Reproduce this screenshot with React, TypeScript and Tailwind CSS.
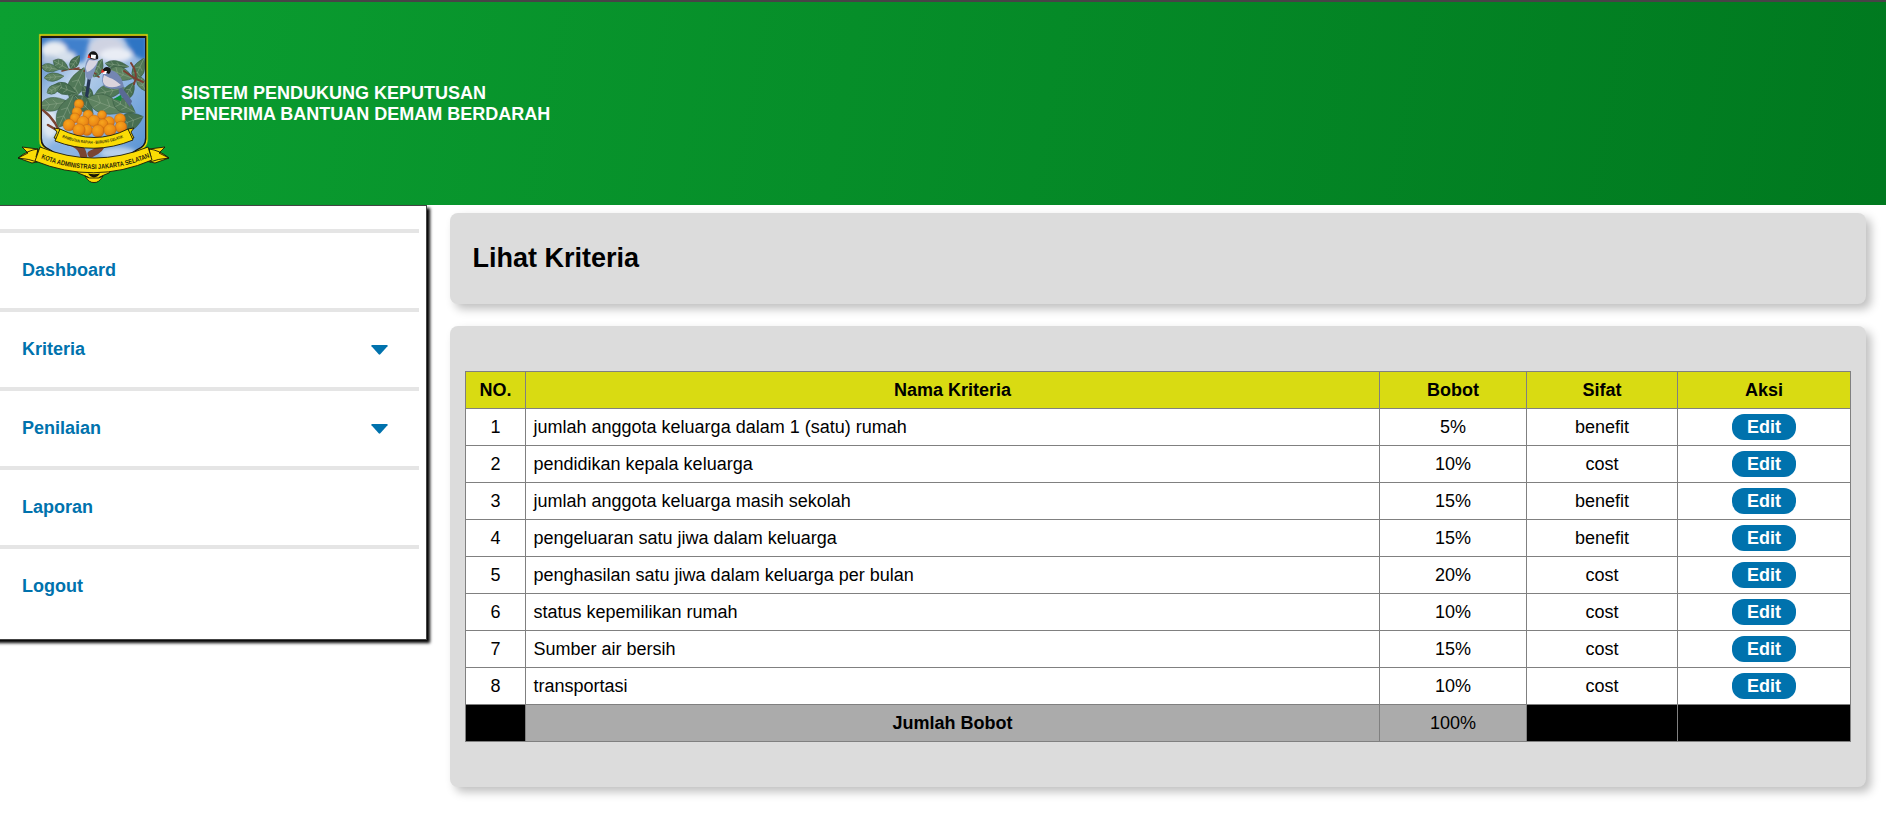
const menu = [
  { label: "Dashboard", open: false },
  { label: "Kriteria", open: true },
  { label: "Penilaian", open: true },
  { label: "Laporan", open: false },
  { label: "Logout", open: false },
];

const rows = [
  ["jumlah anggota keluarga dalam 1 (satu) rumah", "5%", "benefit"],
  ["pendidikan kepala keluarga", "10%", "cost"],
  ["jumlah anggota keluarga masih sekolah", "15%", "benefit"],
  ["pengeluaran satu jiwa dalam keluarga", "15%", "benefit"],
  ["penghasilan satu jiwa dalam keluarga per bulan", "20%", "cost"],
  ["status kepemilikan rumah", "10%", "cost"],
  ["Sumber air bersih", "15%", "cost"],
  ["transportasi", "10%", "cost"],
];

const leaves: [number, number, number, number, number][] = [
  // cx, cy, rx, ry, rotation
  [50, 68, 9, 5, 10],
  [61, 65, 9, 6, 30],
  [75, 62, 8, 5, -55],
  [54, 77, 10, 5, -5],
  [77, 83, 17, 9, -65],
  [65, 89, 12, 7, 20],
  [54, 89, 8, 5, -30],
  [98, 68, 10, 6, -65],
  [117, 65, 12, 5, 8],
  [121, 74, 13, 8, 20],
  [139, 69, 12, 7, -65],
  [129, 91, 10, 6, -60],
  [142, 84, 9, 5, 60],
  [110, 91, 15, 8, -12],
  [88, 94, 9, 6, 60],
  [54, 104, 15, 8, -8],
  [66, 111, 18, 9, -65],
  [84, 105, 13, 8, 45],
  [106, 105, 20, 11, 20],
  [124, 106, 13, 8, 30],
  [131, 121, 13, 10, -20],
];

const fruits: [number, number, number][] = [
  [79, 104, 4.8],
  [77, 112, 5],
  [102, 115, 4.5],
  [88, 115, 5],
  [75, 118, 5],
  [120, 119, 5.5],
  [94, 121, 6],
  [109, 122, 5.5],
  [83, 122, 6],
  [103, 124, 5],
  [69, 125, 6],
  [121, 127, 5.8],
  [87, 130, 5.5],
  [98, 131, 6.2],
  [110, 130, 6.2],
  [79, 130, 6.2],
];

function Emblem() {
  return (
    <svg className="block h-[153px] w-[157px] shrink-0" viewBox="15 32 157 153">
      <defs>
        <linearGradient id="sky" x1="0" y1="0" x2="1" y2="1">
          <stop offset="0" stopColor="#3b79c4" />
          <stop offset=".3" stopColor="#bdd3ec" />
          <stop offset=".6" stopColor="#8db4e0" />
          <stop offset="1" stopColor="#4f8dd2" />
        </linearGradient>
        <radialGradient id="fruit" cx=".4" cy=".35" r=".75">
          <stop offset="0" stopColor="#f7a61e" />
          <stop offset=".6" stopColor="#ec8a14" />
          <stop offset="1" stopColor="#c95f12" />
        </radialGradient>
        <filter id="soft" x="-20%" y="-20%" width="140%" height="140%">
          <feGaussianBlur stdDeviation="2.2" />
        </filter>
        <clipPath id="shield">
          <path d="M42 38H145V138Q145 146 137 149Q115 164 94 164Q72 164 50 149Q42 146 42 138Z" />
        </clipPath>
        <path id="motto" d="M62 137.500Q94 150.500 126 136.500" />
        <path id="name" d="M39 157.5Q94 180.500 149 157.5" />
      </defs>
      <path d="M39.300 34.300H147.700V140Q147 148 139 151Q116 168 94 168Q71 168 48 151Q39 148 39.300 140Z" fill="#f5e00a" stroke="#a9b414" strokeWidth=".6" />
      <path d="M40.500 35.800H146.500V139Q146 147 138 150Q115 166 94 166Q72 166 49 150Q40.500 147 40.500 139Z" fill="#161616" />
      <g clipPath="url(#shield)">
        <rect x="42" y="38" width="103" height="128" fill="url(#sky)" />
        <g filter="url(#soft)">
          <path d="M60 38H90L84 62H66Z" fill="#3f80cc" />
          <ellipse cx="54" cy="50" rx="13" ry="9" fill="#e8ecf2" />
          <ellipse cx="66" cy="57" rx="10" ry="6" fill="#d6e0ec" />
          <ellipse cx="50" cy="60" rx="9" ry="5" fill="#b5c8de" />
          <ellipse cx="107" cy="48" rx="17" ry="11" fill="#cfd3e2" />
          <ellipse cx="116" cy="55" rx="16" ry="7" fill="#e9edf5" />
          <path d="M122 36H147V62L134 55Z" fill="#2f74c4" />
          <ellipse cx="50" cy="124" rx="8" ry="14" fill="#dde7f2" />
          <ellipse cx="118" cy="153" rx="18" ry="6" fill="#b9d0ea" />
          <ellipse cx="60" cy="148" rx="12" ry="6" fill="#88b3e2" />
        </g>
        <g fill="none" stroke="#7b4431" strokeLinecap="round">
          <path d="M62 71Q79 65 99 77M83 69Q78 80 74 96" strokeWidth="1.600" />
          <path d="M43 110Q57 121 63 140M48 125L60 132" strokeWidth="2.500" />
          <path d="M69 142Q84 145 84 161M103 142Q101 150 91 154" strokeWidth="7" />
        </g>
        {leaves.map(([x, y, rx, ry, a], i) => (
          <g key={i} transform={`translate(${x} ${y}) rotate(${a})`}>
            <path
              d={`M${-rx} 0Q${-rx * 0.3} ${-ry * 1.7} ${rx} 0Q${-rx * 0.3} ${ry * 1.7} ${-rx} 0Z`}
              fill={i % 3 === 0 ? "#5d8260" : i % 3 === 1 ? "#517858" : "#476e50"}
              stroke="#35573f"
              strokeWidth=".5"
            />
            <path
              d={`M${-rx} 0H${rx}M${-rx * 0.3} 0L${-rx * 0.55} ${-ry * 0.6}M${-rx * 0.3} 0L${-rx * 0.55} ${ry * 0.6}M${rx * 0.2} 0L${-rx * 0.05} ${-ry * 0.55}M${rx * 0.2} 0L${-rx * 0.05} ${ry * 0.55}`}
              fill="none"
              stroke="#93ac90"
              strokeWidth=".45"
            />
          </g>
        ))}
        <g fill="none" stroke="#7b3f31" strokeLinecap="round">
          <path d="M74 69L79 68M84 71Q92 71 96 74" strokeWidth="1.500" />
          <path d="M131 63Q139 74 134 84M124 71L134 78L143 82" strokeWidth="2" />
        </g>
        <path d="M114 99L122 94L121 101Z" fill="#0e8d3b" />
        <path d="M88 76L85 96L88 98L91 78Z" fill="#263653" />
        <path d="M88 58Q83 67 86 77Q90 83 93 76L98 62Z" fill="#8093bd" />
        <path d="M89 60Q84 67 87 72Q94 70 98 61Z" fill="#d7d5e3" />
        <path d="M88 56Q90 50 95 51.500Q99 54 98 59Q93 61 89 58Z" fill="#161616" />
        <path d="M91 54.500L96 55L95.500 59L91 58Z" fill="#fff" />
        <path d="M88.500 54L87.500 58L91 58Z" fill="#e12b22" />
        <path d="M118 82L132 101L130 107L119 93Z" fill="#596a94" />
        <path d="M104 71Q100 82 105 87Q114 91 124 87Q121 72 110 70Z" fill="#7486b2" />
        <path d="M104 75Q101 83 106 86Q113 89 121 85Q114 79 110 78Z" fill="#dcd4dc" />
        <path d="M102 71Q105 65 110 68Q112 71 109 74Z" fill="#151515" />
        <path d="M103 71L107 71L106 74L103 74Z" fill="#fff" />
        <path d="M102 69L101 73L105 72Z" fill="#e12b22" />
        {fruits.map(([x, y, r], i) => (
          <circle key={i} cx={x} cy={y} r={r} fill="url(#fruit)" stroke="#b9620f" strokeWidth=".4" />
        ))}
      </g>
      <g fill="#fbdc05" stroke="#1c1a08" strokeWidth=".9" strokeLinejoin="round">
        <path d="M60 129L54 128L57 132L54 138L59 139ZM128 129L134 128L131 132L134 138L130 139Z" />
        <path d="M60 129Q94 146 128 129L133 140Q94 156 55 141Z" />
        <path d="M75 168Q82 171 94 171Q106 171 112 168L109 173L104 175Q99 176 94 183Q89 176 83 175L78 173Z" />
        <path d="M85 176Q89 183 94 182.500Q99 183 103 176Q99 179 94 178Q89 179 85 176Z" />
        <path d="M38 149Q28 150 18 158L32 163L46 160L36 157ZM38 149L22 147L28 153L18 158Q30 159 37 162Z" />
        <path d="M149 149Q159 150 169 158L155 163L141 160L151 157ZM149 149L165 147L159 153L169 158Q157 159 150 162Z" />
        <path d="M40 147Q94 169 148 147L152 160Q94 185 35 161Z" />
      </g>
      <path d="M88 173.500Q94 175 100 173.500Q98 177 94 177.500Q90 177 88 173.500Z" fill="#171506" />
      <text fontSize="4.200" fontWeight="700" fill="#3a340c" className="font-['Liberation_Sans']">
        <textPath href="#motto" textLength="63" lengthAdjust="spacingAndGlyphs">RAMBUTAN RAPIAH - BURUNG GELATIK</textPath>
      </text>
      <text fontSize="6.800" fontWeight="700" fill="#29250a" className="font-['Liberation_Sans']">
        <textPath href="#name" startOffset="2" textLength="112" lengthAdjust="spacingAndGlyphs">KOTA ADMINISTRASI JAKARTA SELATAN</textPath>
      </text>
    </svg>
  );
}

export default function App() {
  return (
    <div className="min-h-[837px] bg-white font-['Liberation_Sans',Arial,sans-serif] text-[18px] leading-[21px] text-black">
      <header className="flex h-[205px] border-t-2 border-[#484347] bg-linear-[100deg,#0b9f31,#00791f] pt-[30px] pl-[15px]">
        <Emblem />
        <h1 className="mt-[51px] ml-[9px] font-bold text-white">
          SISTEM PENDUKUNG KEPUTUSAN
          <br />
          PENERIMA BANTUAN DEMAM BERDARAH
        </h1>
      </header>
      <div className="flex items-start overflow-x-clip">
        <nav className="-ml-[10px] h-[435px] w-[437px] shrink-0 border border-[#444] bg-white pt-[23px] pr-[7px] pl-[9px] font-bold text-[#0072ad] shadow-[3px_3px_3px_#000]">
          {menu.map((m) => (
            <a key={m.label} className="flex h-[79px] items-center justify-between border-t-4 border-[#e5e5e5] pr-[31px] pl-[22px]">
              {m.label}
              {m.open && (
                <svg className="mt-px h-[10px] w-[17px]" viewBox="0 0 17 10">
                  <path d="M.8 0H16.200Q17 .4 16.500 1.300L9.300 9.300Q8.500 10 7.700 9.300L.5 1.300Q0 .4.800 0Z" fill="#0072ad" />
                </svg>
              )}
            </a>
          ))}
        </nav>
        <main className="mt-2 mr-5 ml-[23px] flex grow flex-col gap-[22px]">
          <section className="flex h-[91px] items-center rounded-lg bg-[#dcdcdc] pl-[22.5px] shadow-[5px_5px_10px_rgba(0,0,0,0.25)]">
            <h2 className="text-[27px] leading-[31px] font-bold">Lihat Kriteria</h2>
          </section>
          <section className="h-[461px] rounded-lg bg-[#dcdcdc] px-[15px] pt-[45px] shadow-[5px_5px_10px_rgba(0,0,0,0.25)]">
            <table className="w-[1386px] table-fixed border-collapse bg-white text-center [&_td]:border [&_td]:border-[#808080] [&_td]:p-0 [&_th]:border [&_th]:border-[#808080] [&_th]:p-0 [&_tr]:h-[37px]">
              <colgroup>
                <col className="w-[60px]" />
                <col className="w-[854px]" />
                <col className="w-[147px]" />
                <col className="w-[151px]" />
                <col className="w-[173px]" />
              </colgroup>
              <thead>
                <tr className="bg-[#d9db12]">
                  <th>NO.</th>
                  <th>Nama Kriteria</th>
                  <th>Bobot</th>
                  <th>Sifat</th>
                  <th>Aksi</th>
                </tr>
              </thead>
              <tbody>
                {rows.map(([name, weight, kind], i) => (
                  <tr key={name}>
                    <td>{i + 1}</td>
                    <td className="text-left">
                      <span className="pl-[7.5px]">{name}</span>
                    </td>
                    <td>{weight}</td>
                    <td>{kind}</td>
                    <td>
                      <button className="mx-auto block h-[26px] w-[64px] rounded-[12px] bg-[#0072ad] font-bold text-white">Edit</button>
                    </td>
                  </tr>
                ))}
                <tr className="bg-[#ababab]">
                  <td className="bg-black" />
                  <td className="font-bold">Jumlah Bobot</td>
                  <td>100%</td>
                  <td className="bg-black" />
                  <td className="bg-black" />
                </tr>
              </tbody>
            </table>
          </section>
        </main>
      </div>
    </div>
  );
}
